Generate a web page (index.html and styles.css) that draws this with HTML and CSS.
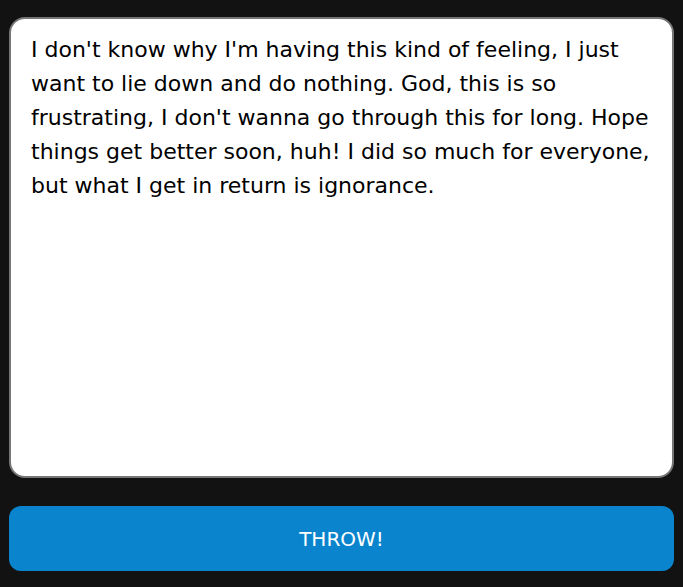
FILE: index.html
```html
<!DOCTYPE html>
<html lang="en">
<head>
<meta charset="utf-8">
<title>Throw</title>
<link rel="stylesheet" href="styles.css">
</head>
<body>
<main class="page">
  <div class="note">I don't know why I'm having this kind of feeling, I just want to lie down and do nothing. God, this is so frustrating, I don't wanna go through this for long. Hope things get better soon, huh! I did so much for everyone, but what I get in return is ignorance.</div>
  <button class="throw" type="button">THROW!</button>
</main>
</body>
</html>
```
FILE: styles.css
```css
html, body {
  margin: 0;
  background: #121212;
}
.page {
  display: flex;
  flex-direction: column;
  gap: 28px;
  padding: 17px 9px 0 9px;
}
.note {
  box-sizing: border-box;
  height: 461px;
  background: #fff;
  border: 2px solid #767676;
  border-radius: 16px;
  padding: 14px 20px;
  font-family: "DejaVu Sans", sans-serif;
  font-size: 22px;
  line-height: 34px;
  color: #000;
}
.throw {
  height: 65px;
  border: none;
  border-radius: 12px;
  background: #0a84cc;
  color: #fff;
  font-family: "DejaVu Sans", sans-serif;
  font-size: 20px;
}
```
